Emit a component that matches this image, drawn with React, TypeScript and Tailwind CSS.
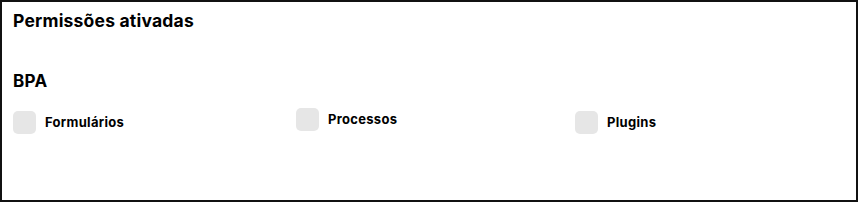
export default function App() {
  const font = { fontFamily: 'Inter, "Noto Sans", sans-serif' }
  return (
    <div className="h-[205px] w-[859px] bg-white" style={font}>
      <div className="h-[202px] w-[858px] border-2 border-[#111] px-[11px] pt-[7px] text-black">
        <h2 className="text-[17.5px] font-bold leading-[24px] tracking-[0.2px]">Permissões ativadas</h2>
        <h3 className="mt-[36px] text-[17px] font-bold leading-[24px] tracking-[0.3px]">BPA</h3>
        <div className="mt-[18px] flex items-start">
          <label className="flex w-[283px] items-center gap-[9px]">
            <span className="h-[23px] w-[23px] rounded-[5px] bg-[#e6e6e6]" />
            <span className="text-[13px] font-bold tracking-[0.3px]">Formulários</span>
          </label>
          <label className="-mt-[3px] flex w-[279px] items-center gap-[9px]">
            <span className="h-[23px] w-[23px] rounded-[5px] bg-[#e6e6e6]" />
            <span className="text-[13px] font-bold tracking-[0.3px]">Processos</span>
          </label>
          <label className="flex items-center gap-[9px]">
            <span className="h-[23px] w-[23px] rounded-[5px] bg-[#e6e6e6]" />
            <span className="text-[13px] font-bold tracking-[0.3px]">Plugins</span>
          </label>
        </div>
      </div>
    </div>
  )
}
